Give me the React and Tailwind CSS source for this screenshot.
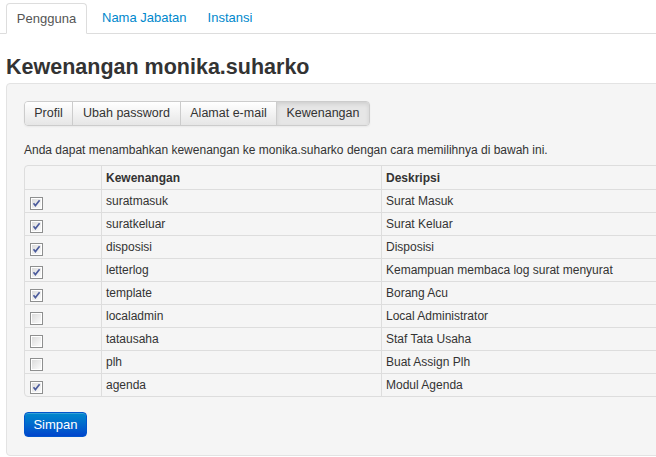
import { useState } from 'react';

const rows = [
  { name: 'suratmasuk', desc: 'Surat Masuk', on: true },
  { name: 'suratkeluar', desc: 'Surat Keluar', on: true },
  { name: 'disposisi', desc: 'Disposisi', on: true },
  { name: 'letterlog', desc: 'Kemampuan membaca log surat menyurat', on: true },
  { name: 'template', desc: 'Borang Acu', on: true },
  { name: 'localadmin', desc: 'Local Administrator', on: false },
  { name: 'tatausaha', desc: 'Staf Tata Usaha', on: false },
  { name: 'plh', desc: 'Buat Assign Plh', on: false },
  { name: 'agenda', desc: 'Modul Agenda', on: true },
];

function Check({ on, onClick }) {
  // old-style windows checkbox
  return (
    <svg width="13" height="13" viewBox="0 0 13 13" onClick={onClick} className="cursor-pointer">
      <defs>
        <linearGradient id="cb" x1="0" y1="0" x2="1" y2="1">
          <stop offset="0" stopColor="#dcdcdc" />
          <stop offset="1" stopColor="#fbfbfb" />
        </linearGradient>
      </defs>
      <rect x="0.5" y="0.5" width="12" height="12" fill="#fff" stroke="#8e8f8f" />
      <rect x="2" y="2" width="9" height="9" fill="url(#cb)" />
      {on && <path d="M3.5 6.2 L5.4 8.6 L9.6 3.2" fill="none" stroke="#4b5b9c" strokeWidth="1.6" />}
    </svg>
  );
}

export default function App() {
  const [items, setItems] = useState(rows);
  const subTabs = [
    { label: 'Profil', w: 'w-[47px]' },
    { label: 'Ubah password', w: 'w-[108px]' },
    { label: 'Alamat e-mail', w: 'w-[96px]' },
    { label: 'Kewenangan', w: 'w-[93px]' },
  ];

  return (
    <div className="w-[656px] h-[457px] overflow-hidden bg-white text-[#333] text-[13px]" style={{ fontFamily: '"Liberation Sans", Arial, sans-serif' }}>
      {/* Top tabs */}
      <div className="flex border-b border-[#ddd] h-[34px] pt-[3px] pl-[6px]">
        <div className="px-[12px] flex items-center border border-[#ddd] border-b-white -mb-px rounded-t-[4px] bg-white text-[#555] w-[81px] justify-center">Pengguna</div>
        <div className="px-[15px] flex items-center text-[#0088cc]">Nama Jabatan</div>
        <div className="px-[6px] flex items-center text-[#0088cc]">Instansi</div>
      </div>

      <h3 className="mt-[19px] ml-[6px] text-[21.5px] font-bold leading-[28px] text-[#333]">Kewenangan monika.suharko</h3>

      {/* Well */}
      <div className="ml-[6px] mt-[2px] w-[700px] h-[373px] bg-[#f5f5f5] border border-[#e3e3e3] rounded-[4px] pt-[17px] pl-[17px]">
        <div className="inline-flex h-[25px] rounded-[4px] border border-[#ccc] shadow-[0_1px_2px_rgba(0,0,0,0.05)] overflow-hidden text-[12.5px]">
          {subTabs.map((t, i) => (
            <div
              key={t.label}
              className={`flex items-center justify-center whitespace-nowrap border-l border-[#ccc] first:border-l-0 ${t.w} ${
                i === 3
                  ? 'bg-[#e6e6e6] shadow-[inset_0_2px_4px_rgba(0,0,0,0.1)]'
                  : 'bg-gradient-to-b from-white to-[#e6e6e6]'
              }`}
            >
              {t.label}
            </div>
          ))}
        </div>

        <p className="mt-[15px] text-[12px] leading-[18px]">Anda dapat menambahkan kewenangan ke monika.suharko dengan cara memilihnya di bawah ini.</p>

        <table className="mt-[6px] w-[680px] border-separate border-spacing-0 border border-[#ddd] rounded-[4px] text-[12px]">
          <thead>
            <tr className="h-[23px]">
              <th className="w-[76px]"></th>
              <th className="w-[280px] text-left font-bold px-[4px] border-l border-[#ddd]">Kewenangan</th>
              <th className="text-left font-bold px-[4px] border-l border-[#ddd]">Deskripsi</th>
            </tr>
          </thead>
          <tbody>
            {items.map((r, i) => (
              <tr key={r.name} className="h-[23px]">
                <td className="border-t border-[#ddd] pl-[5px] pt-[4px] align-middle">
                  <Check
                    on={r.on}
                    onClick={() => setItems(items.map((x, j) => (j === i ? { ...x, on: !x.on } : x)))}
                  />
                </td>
                <td className="border-t border-l border-[#ddd] px-[4px]">{r.name}</td>
                <td className="border-t border-l border-[#ddd] px-[4px]">{r.desc}</td>
              </tr>
            ))}
          </tbody>
        </table>

        <button className="mt-[15px] h-[25px] w-[63px] rounded-[4px] border border-[#0055cc] bg-gradient-to-b from-[#0088cc] to-[#0044cc] text-white text-[13px] shadow-[inset_0_1px_0_rgba(255,255,255,0.2)]">
          Simpan
        </button>
      </div>
    </div>
  );
}
